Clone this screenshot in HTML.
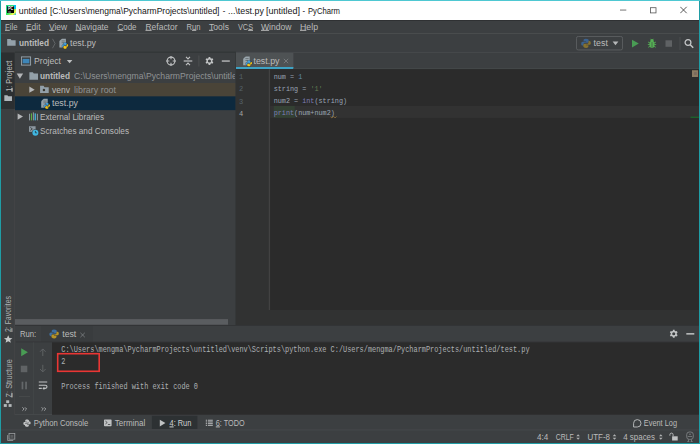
<!DOCTYPE html>
<html lang="en"><head><meta charset="utf-8"><title>untitled - test.py - PyCharm</title>
<style>
html,body{margin:0;padding:0}
body{width:700px;height:444px;background:#209da5;position:relative;overflow:hidden;font-family:'Liberation Sans', sans-serif}
#w{position:absolute;left:0;top:0;width:700px;height:444px;overflow:hidden}
#w div,#w svg,#w span.t{position:absolute;display:block}
span.t{white-space:pre}
u{text-decoration:underline;text-decoration-thickness:0.55px;text-underline-offset:0.4px}
</style></head>
<body><div id="w">
<svg style="left:1px;top:1px" width="698" height="19"><rect x="0.00" y="0.00" width="698.00" height="19.00" fill="#ffffff"/></svg>
<svg style="left:1px;top:20px" width="698" height="423"><rect x="0.00" y="0.00" width="698.00" height="423.00" fill="#3c3f41"/></svg>
<svg style="left:0px;top:0px" width="700" height="1"><rect x="0.00" y="0.00" width="700.00" height="1.00" fill="#4ec8d2"/></svg>
<svg style="left:6px;top:5px;" width="11" height="11"><g transform="translate(0.00,0.00)"><defs><linearGradient id="pcg" x1="0" y1="0" x2="1" y2="1"><stop offset="0" stop-color="#21d789"/><stop offset="0.55" stop-color="#3bea62"/><stop offset="0.8" stop-color="#fcf84a"/><stop offset="1" stop-color="#07c3f2"/></linearGradient></defs>
<rect width="10" height="10" fill="url(#pcg)"/><rect x="7.5" y="0" width="2.5" height="4" fill="#07c3f2"/><rect x="1.1" y="1.3" width="6.9" height="6.7" fill="#000"/><rect x="2.2" y="6.7" width="2.7" height="0.6" fill="#fff"/></g></svg>
<span class="t" style="left:0;top:0;transform:translate(8.00px,2.80px) scaleX(0.7944);font-family:'Liberation Sans', sans-serif;font-size:4.8px;font-weight:700;color:#fff;line-height:12px;height:12px;transform-origin:0 0;">PC</span>
<span class="t" style="left:0;top:0;transform:translate(18.80px,4.70px) scaleX(0.9203);font-family:'Liberation Sans', sans-serif;font-size:9.5px;font-weight:400;color:#151515;line-height:12px;height:12px;transform-origin:0 0;">untitled</span>
<span class="t" style="left:0;top:0;transform:translate(50.00px,4.70px) scaleX(0.8942);font-family:'Liberation Sans', sans-serif;font-size:9.5px;font-weight:400;color:#151515;line-height:12px;height:12px;transform-origin:0 0;">[C:\Users\mengma\PycharmProjects\untitled]</span>
<span class="t" style="left:0;top:0;transform:translate(222.80px,4.70px) scaleX(0.8197);font-family:'Liberation Sans', sans-serif;font-size:9.5px;font-weight:400;color:#151515;line-height:12px;height:12px;transform-origin:0 0;">-</span>
<span class="t" style="left:0;top:0;transform:translate(228.00px,4.70px) scaleX(0.9287);font-family:'Liberation Sans', sans-serif;font-size:9.5px;font-weight:400;color:#151515;line-height:12px;height:12px;transform-origin:0 0;">...\test.py</span>
<span class="t" style="left:0;top:0;transform:translate(266.00px,4.70px) scaleX(0.9465);font-family:'Liberation Sans', sans-serif;font-size:9.5px;font-weight:400;color:#151515;line-height:12px;height:12px;transform-origin:0 0;">[untitled]</span>
<span class="t" style="left:0;top:0;transform:translate(302.60px,4.70px) scaleX(0.8197);font-family:'Liberation Sans', sans-serif;font-size:9.5px;font-weight:400;color:#151515;line-height:12px;height:12px;transform-origin:0 0;">-</span>
<span class="t" style="left:0;top:0;transform:translate(308.00px,4.70px) scaleX(0.8082);font-family:'Liberation Sans', sans-serif;font-size:9.5px;font-weight:400;color:#151515;line-height:12px;height:12px;transform-origin:0 0;">PyCharm</span>
<svg style="left:620px;top:9px" width="7" height="2"><rect x="0.00" y="0.60" width="6.30" height="0.90" fill="#666"/></svg>
<svg style="left:650px;top:7px" width="7" height="7"><rect x="0.40" y="0.70" width="5.60" height="5.20" rx="0" fill="none" stroke="#555" stroke-width="0.8"/></svg>
<svg style="left:680px;top:6px;" width="8" height="9"><g transform="translate(0.00,0.50)"><path d="M0.3 0.3L6.7 6.7M6.7 0.3L0.3 6.7" stroke="#2e2e2e" stroke-width="0.8" fill="none"/></g></svg>
<svg style="left:1px;top:20px" width="698" height="1"><rect x="0.00" y="0.00" width="698.00" height="1.00" fill="#2f3133"/></svg>
<span class="t" style="left:0;top:0;transform:translate(5.00px,20.80px) scaleX(0.8439);font-family:'Liberation Sans', sans-serif;font-size:9.2px;font-weight:400;color:#bbbbbb;line-height:12px;height:12px;transform-origin:0 0;"><u>F</u>ile</span>
<span class="t" style="left:0;top:0;transform:translate(26.00px,20.80px) scaleX(0.9152);font-family:'Liberation Sans', sans-serif;font-size:9.2px;font-weight:400;color:#bbbbbb;line-height:12px;height:12px;transform-origin:0 0;"><u>E</u>dit</span>
<span class="t" style="left:0;top:0;transform:translate(49.00px,20.80px) scaleX(0.9114);font-family:'Liberation Sans', sans-serif;font-size:9.2px;font-weight:400;color:#bbbbbb;line-height:12px;height:12px;transform-origin:0 0;"><u>V</u>iew</span>
<span class="t" style="left:0;top:0;transform:translate(75.50px,20.80px) scaleX(0.9100);font-family:'Liberation Sans', sans-serif;font-size:9.2px;font-weight:400;color:#bbbbbb;line-height:12px;height:12px;transform-origin:0 0;"><u>N</u>avigate</span>
<span class="t" style="left:0;top:0;transform:translate(117.50px,20.80px) scaleX(0.8649);font-family:'Liberation Sans', sans-serif;font-size:9.2px;font-weight:400;color:#bbbbbb;line-height:12px;height:12px;transform-origin:0 0;"><u>C</u>ode</span>
<span class="t" style="left:0;top:0;transform:translate(145.50px,20.80px) scaleX(0.9213);font-family:'Liberation Sans', sans-serif;font-size:9.2px;font-weight:400;color:#bbbbbb;line-height:12px;height:12px;transform-origin:0 0;"><u>R</u>efactor</span>
<span class="t" style="left:0;top:0;transform:translate(186.50px,20.80px) scaleX(0.8304);font-family:'Liberation Sans', sans-serif;font-size:9.2px;font-weight:400;color:#bbbbbb;line-height:12px;height:12px;transform-origin:0 0;">R<u>u</u>n</span>
<span class="t" style="left:0;top:0;transform:translate(209.00px,20.80px) scaleX(0.9323);font-family:'Liberation Sans', sans-serif;font-size:9.2px;font-weight:400;color:#bbbbbb;line-height:12px;height:12px;transform-origin:0 0;"><u>T</u>ools</span>
<span class="t" style="left:0;top:0;transform:translate(238.00px,20.80px) scaleX(0.7934);font-family:'Liberation Sans', sans-serif;font-size:9.2px;font-weight:400;color:#bbbbbb;line-height:12px;height:12px;transform-origin:0 0;">VC<u>S</u></span>
<span class="t" style="left:0;top:0;transform:translate(261.00px,20.80px) scaleX(0.9331);font-family:'Liberation Sans', sans-serif;font-size:9.2px;font-weight:400;color:#bbbbbb;line-height:12px;height:12px;transform-origin:0 0;"><u>W</u>indow</span>
<span class="t" style="left:0;top:0;transform:translate(300.00px,20.80px) scaleX(0.9521);font-family:'Liberation Sans', sans-serif;font-size:9.2px;font-weight:400;color:#bbbbbb;line-height:12px;height:12px;transform-origin:0 0;"><u>H</u>elp</span>
<svg style="left:1px;top:33px" width="698" height="1"><rect x="0.00" y="0.10" width="698.00" height="0.90" fill="#4b4e50"/></svg>
<svg style="left:6px;top:38px;" width="12" height="10"><g transform="translate(0.70,0.10) scale(0.9400,0.8889)"><path d="M0.5 1h3.6l1 1.4h4.4v6.1h-9z" fill="#93a0a9"/></g></svg>
<span class="t" style="left:0;top:0;transform:translate(19.00px,37.30px) scaleX(0.9044);font-family:'Liberation Sans', sans-serif;font-size:9.2px;font-weight:700;color:#bbbbbb;line-height:12px;height:12px;transform-origin:0 0;">untitled</span>
<svg style="left:51px;top:38px;" width="6" height="12"><g transform="translate(0.90,0.00)"><path d="M0.6 0.8L3.2 5.5L0.6 10.2" stroke="#6b6f71" stroke-width="0.8" fill="none"/></g></svg>
<svg style="left:59px;top:38px;" width="12" height="12"><g transform="translate(0.20,0.30) scale(1.0000,1.0000)"><path d="M2.8 0.4h3.9v8.9h-6.5v-6.3z" fill="#a3afb7" opacity="0.9"/><path d="M2.5 0.4v2.4h-2.4z" fill="#9aa7b0" opacity="0.55"/>
<rect x="2.4" y="4" width="2.6" height="0.9" fill="#3c3f41" opacity="0.55"/><rect x="2.4" y="2.2" width="3.2" height="0.9" fill="#3c3f41" opacity="0.55"/>
<g transform="translate(2.8,4.3) scale(0.63)" stroke="#1b2a33" stroke-opacity="0.55" stroke-width="1.6" paint-order="stroke"><path d="M4.9 0.4c-2 0-2.3 0.9-2.3 1.6v1h2.5v0.5h-3.5c-1 0-1.4 0.9-1.4 1.9s0.4 1.9 1.4 1.9h0.9v-1.2c0-1 0.8-1.6 1.6-1.6h2.3c0.8 0 1.3-0.6 1.3-1.3v-1.2c0-0.8-0.7-1.6-2.8-1.6z" fill="#3f9fde"/>
<path d="M5.1 9.6c2 0 2.3-0.9 2.3-1.6v-1h-2.5v-0.5h3.5c1 0 1.4-0.9 1.4-1.9s-0.4-1.9-1.4-1.9h-0.9v1.2c0 1-0.8 1.6-1.6 1.6h-2.3c-0.8 0-1.3 0.6-1.3 1.3v1.2c0 0.8 0.7 1.6 2.8 1.6z" fill="#f8c514"/></g></g></svg>
<span class="t" style="left:0;top:0;transform:translate(70.00px,37.30px) scaleX(0.9602);font-family:'Liberation Sans', sans-serif;font-size:9.2px;font-weight:400;color:#bbbbbb;line-height:12px;height:12px;transform-origin:0 0;">test.py</span>
<svg style="left:576px;top:36px" width="47" height="15"><rect x="0.45" y="0.45" width="46.10" height="13.50" rx="1.8" fill="none" stroke="#5e6163" stroke-width="0.9"/></svg>
<svg style="left:581px;top:38px;" width="11" height="12"><g transform="translate(0.00,0.30)"><path d="M4.9 0.4c-2 0-2.3 0.9-2.3 1.6v1h2.5v0.5h-3.5c-1 0-1.4 0.9-1.4 1.9s0.4 1.9 1.4 1.9h0.9v-1.2c0-1 0.8-1.6 1.6-1.6h2.3c0.8 0 1.3-0.6 1.3-1.3v-1.2c0-0.8-0.7-1.6-2.8-1.6z" fill="#3c628e"/>
<path d="M5.1 9.6c2 0 2.3-0.9 2.3-1.6v-1h-2.5v-0.5h3.5c1 0 1.4-0.9 1.4-1.9s-0.4-1.9-1.4-1.9h-0.9v1.2c0 1-0.8 1.6-1.6 1.6h-2.3c-0.8 0-1.3 0.6-1.3 1.3v1.2c0 0.8 0.7 1.6 2.8 1.6z" fill="#87722f"/></g></svg>
<span class="t" style="left:0;top:0;transform:translate(593.60px,37.40px) scaleX(0.9654);font-family:'Liberation Sans', sans-serif;font-size:9.2px;font-weight:400;color:#bbbbbb;line-height:12px;height:12px;transform-origin:0 0;">test</span>
<svg style="left:612px;top:41px;" width="8" height="6"><g transform="translate(0.60,0.40)"><path d="M0 0h5.8l-2.9 3.8z" fill="#b6b8b9"/></g></svg>
<svg style="left:632px;top:39px;" width="8" height="10"><g transform="translate(0.00,0.80)"><path d="M0 0L6.8 3.8L0 7.6z" fill="#499c54"/></g></svg>
<svg style="left:647px;top:38px;" width="11" height="12"><g transform="translate(0.50,0.50)"><ellipse cx="4.5" cy="5.8" rx="2.6" ry="3.6" fill="#55b054"/><circle cx="4.5" cy="2" r="1.6" fill="#55b054"/>
<path d="M0.5 3.5l2 1M8.5 3.5l-2 1M0.3 6h2M8.7 6h-2M0.7 8.8l1.8-1M8.3 8.8l-1.8-1M3 0.3l0.8 1M6 0.3l-0.8 1" stroke="#55b054" stroke-width="0.8" fill="none"/>
<path d="M4.5 3.6v5.6" stroke="#3c3f41" stroke-width="0.6"/></g></svg>
<svg style="left:665px;top:40px" width="7" height="7"><rect x="0.50" y="0.30" width="6.50" height="6.50" fill="#5f6264"/></svg>
<svg style="left:679px;top:37px" width="2" height="13"><rect x="0.50" y="0.00" width="1.00" height="13.00" fill="#4b4e50"/></svg>
<svg style="left:684px;top:38px;" width="11" height="12"><g transform="translate(0.00,0.50)"><circle cx="4" cy="4" r="2.9" stroke="#c4c6c7" stroke-width="1.3" fill="none"/><path d="M6.2 6.2L9.2 9.2" stroke="#c4c6c7" stroke-width="1.5"/></g></svg>
<svg style="left:15px;top:51px" width="221" height="2"><rect x="0.00" y="0.70" width="221.00" height="0.90" fill="#2f3234"/></svg>
<svg style="left:236px;top:51px" width="463" height="2"><rect x="0.00" y="0.90" width="463.00" height="0.90" fill="#494b4e"/></svg>
<svg style="left:1px;top:53px" width="14" height="377"><rect x="0.00" y="0.00" width="14.00" height="377.00" fill="#3c3f41"/></svg>
<svg style="left:14px;top:109px" width="1" height="306"><rect x="0.10" y="0.00" width="0.90" height="306.00" fill="#434547"/></svg>
<svg style="left:1px;top:52px" width="14" height="57"><rect x="0.00" y="0.50" width="13.60" height="56.40" fill="#2c2f31"/></svg>
<span class="t" style="left:0;top:0;transform:translate(2.60px,91.80px) rotate(-90deg) scaleX(0.8537);font-family:'Liberation Sans', sans-serif;font-size:8.6px;font-weight:400;color:#bbbbbb;line-height:12px;height:12px;transform-origin:0 0;"><u>1</u>: Project</span>
<svg style="left:3px;top:94px;" width="11" height="9"><g transform="translate(0.90,0.50) scale(0.8500,0.7778)"><path d="M0.5 1h3.6l1 1.4h4.4v6.1h-9z" fill="#aeb5ba"/></g></svg>
<span class="t" style="left:0;top:0;transform:translate(2.40px,332.00px) rotate(-90deg) scaleX(0.8017);font-family:'Liberation Sans', sans-serif;font-size:8.6px;font-weight:400;color:#adb0b2;line-height:12px;height:12px;transform-origin:0 0;"><u>2</u>: Favorites</span>
<svg style="left:3px;top:335px;" width="11" height="10"><g transform="translate(0.80,0.00) scale(0.8800,0.8300)"><path d="M5 0.3l1.4 3.2l3.4 0.3l-2.6 2.2l0.8 3.4l-3-1.8l-3 1.8l0.8-3.4l-2.6-2.2l3.4-0.3z" fill="#c6c8c9"/></g></svg>
<span class="t" style="left:0;top:0;transform:translate(2.50px,397.40px) rotate(-90deg) scaleX(0.8510);font-family:'Liberation Sans', sans-serif;font-size:8.6px;font-weight:400;color:#adb0b2;line-height:12px;height:12px;transform-origin:0 0;"><u>Z</u>: Structure</span>
<svg style="left:3px;top:400px;" width="10" height="9"><g transform="translate(0.80,0.30)"><rect x="2.4" y="0" width="3" height="2.8" fill="#b4b8bb"/><rect x="0" y="3.8" width="3" height="2.8" fill="#b4b8bb"/><rect x="4.8" y="3.8" width="3" height="2.8" fill="#b4b8bb"/></g></svg>
<svg style="left:21px;top:56px;" width="11" height="11"><g transform="translate(0.00,0.50)"><rect x="0.4" y="0.4" width="9.2" height="8.2" fill="none" stroke="#9aa7b0" stroke-width="0.9"/><rect x="1.6" y="2.4" width="6.8" height="4.4" fill="#3e86b8"/></g></svg>
<span class="t" style="left:0;top:0;transform:translate(34.00px,55.20px) scaleX(0.9251);font-family:'Liberation Sans', sans-serif;font-size:9.4px;font-weight:400;color:#bbbbbb;line-height:12px;height:12px;transform-origin:0 0;">Project</span>
<svg style="left:66px;top:59px;" width="8" height="6"><g transform="translate(0.80,0.90)"><path d="M0 0h5.6l-2.8 3.4z" fill="#bcbebf"/></g></svg>
<svg style="left:166px;top:56px;" width="11" height="11"><g transform="translate(0.00,0.00)"><circle cx="5" cy="5" r="3.9" stroke="#c0c2c3" stroke-width="1.1" fill="none"/><path d="M5 0v3.3M5 10v-3.3M0 5h3.3M10 5h-3.3" stroke="#c0c2c3" stroke-width="1.1"/></g></svg>
<svg style="left:183px;top:56px;" width="11" height="11"><g transform="translate(0.50,0.00)"><path d="M0.2 5h8.6" stroke="#c0c2c3" stroke-width="1.2"/><path d="M2.5 0.9L4.5 3L6.5 0.9M2.5 9.1L4.5 7L6.5 9.1" stroke="#c0c2c3" stroke-width="1.1" fill="none"/></g></svg>
<svg style="left:198px;top:55px" width="2" height="12"><rect x="0.50" y="0.50" width="0.80" height="11.00" fill="#505355"/></svg>
<svg style="left:205px;top:56px;" width="10" height="11"><g transform="translate(0.20,0.70) scale(0.8500,0.8500)"><circle cx="5" cy="5" r="2.7" stroke="#c3c5c6" stroke-width="1.7" fill="none"/><path d="M5.00 2.40L5.00 0.30M2.75 3.70L0.93 2.65M2.75 6.30L0.93 7.35M5.00 7.60L5.00 9.70M7.25 6.30L9.07 7.35M7.25 3.70L9.07 2.65" stroke="#c3c5c6" stroke-width="2.1"/></g></svg>
<svg style="left:221px;top:60px" width="9" height="2"><rect x="0.80" y="0.40" width="8.00" height="1.30" fill="#c0c2c3"/></svg>
<svg style="left:15px;top:83px" width="221" height="14"><rect x="0.00" y="0.00" width="221.00" height="13.45" fill="#4a4438"/></svg>
<svg style="left:15px;top:96px" width="221" height="15"><rect x="0.00" y="0.40" width="221.00" height="13.75" fill="#0d293e"/></svg>
<svg style="left:16px;top:73px;" width="9" height="7"><g transform="translate(0.70,0.52) scale(1.0323,1.0833)"><path d="M0 0h6.2l-3.1 4.8z" fill="#b4b6b8"/></g></svg>
<svg style="left:28px;top:71px;" width="12" height="11"><g transform="translate(0.90,0.22) scale(0.9600,0.9889)"><path d="M0.5 1h3.6l1 1.4h4.4v6.1h-9z" fill="#93a0a9"/></g></svg>
<span class="t" style="left:0;top:0;transform:translate(40.00px,70.42px) scaleX(0.9044);font-family:'Liberation Sans', sans-serif;font-size:9.2px;font-weight:700;color:#bbbbbb;line-height:12px;height:12px;transform-origin:0 0;">untitled</span>
<div style="left:74px;top:70px;width:161px;height:13px;overflow:hidden" id="clip1"><span class="t" style="left:0;top:0;transform:translate(0.00px,0.42px) scaleX(0.9399);font-family:'Liberation Sans', sans-serif;font-size:9.2px;font-weight:400;color:#8f9294;line-height:12px;height:12px;transform-origin:0 0;">C:\Users\mengma\PycharmProjects\untitled</span></div>

<svg style="left:29px;top:86px;" width="7" height="8"><g transform="translate(0.30,0.58) scale(1.1250,1.0000)"><path d="M0 0v6.2l4.8-3.1z" fill="#b4b6b8"/></g></svg>
<svg style="left:39px;top:84px;" width="12" height="11"><g transform="translate(0.60,0.88) scale(0.9600,0.9556)"><path d="M0.5 1h3.6l1 1.4h4.4v6.1h-9z" fill="#93a0a9"/><circle cx="4.5" cy="5.4" r="1.3" fill="#3a372f"/></g></svg>
<span class="t" style="left:0;top:0;transform:translate(52.00px,83.88px) scaleX(0.9268);font-family:'Liberation Sans', sans-serif;font-size:9.2px;font-weight:400;color:#bbbbbb;line-height:12px;height:12px;transform-origin:0 0;">venv</span>
<span class="t" style="left:0;top:0;transform:translate(74.00px,83.88px) scaleX(0.9676);font-family:'Liberation Sans', sans-serif;font-size:9.2px;font-weight:400;color:#8f9294;line-height:12px;height:12px;transform-origin:0 0;">library root</span>
<svg style="left:41px;top:98px;" width="11" height="12"><g transform="translate(0.00,0.42) scale(1.0000,1.0000)"><path d="M2.8 0.4h3.9v8.9h-6.5v-6.3z" fill="#a3afb7" opacity="0.9"/><path d="M2.5 0.4v2.4h-2.4z" fill="#9aa7b0" opacity="0.55"/>
<rect x="2.4" y="4" width="2.6" height="0.9" fill="#3c3f41" opacity="0.55"/><rect x="2.4" y="2.2" width="3.2" height="0.9" fill="#3c3f41" opacity="0.55"/>
<g transform="translate(2.8,4.3) scale(0.63)" stroke="#1b2a33" stroke-opacity="0.55" stroke-width="1.6" paint-order="stroke"><path d="M4.9 0.4c-2 0-2.3 0.9-2.3 1.6v1h2.5v0.5h-3.5c-1 0-1.4 0.9-1.4 1.9s0.4 1.9 1.4 1.9h0.9v-1.2c0-1 0.8-1.6 1.6-1.6h2.3c0.8 0 1.3-0.6 1.3-1.3v-1.2c0-0.8-0.7-1.6-2.8-1.6z" fill="#3f9fde"/>
<path d="M5.1 9.6c2 0 2.3-0.9 2.3-1.6v-1h-2.5v-0.5h3.5c1 0 1.4-0.9 1.4-1.9s-0.4-1.9-1.4-1.9h-0.9v1.2c0 1-0.8 1.6-1.6 1.6h-2.3c-0.8 0-1.3 0.6-1.3 1.3v1.2c0 0.8 0.7 1.6 2.8 1.6z" fill="#f8c514"/></g></g></svg>
<span class="t" style="left:0;top:0;transform:translate(52.00px,97.33px) scaleX(0.9602);font-family:'Liberation Sans', sans-serif;font-size:9.2px;font-weight:400;color:#bbbbbb;line-height:12px;height:12px;transform-origin:0 0;">test.py</span>
<svg style="left:17px;top:113px;" width="7" height="8"><g transform="translate(0.60,0.47) scale(1.1250,1.0000)"><path d="M0 0v6.2l4.8-3.1z" fill="#b4b6b8"/></g></svg>
<svg style="left:29px;top:112px;" width="11" height="11"><g transform="translate(0.00,0.37)"><rect x="0" y="1.4" width="0.9" height="6.6" fill="#9aa7b0"/><rect x="1.9" y="1" width="1.05" height="7" fill="#62b543"/><rect x="3.9" y="0" width="0.9" height="8" fill="#9aa7b0"/><rect x="5.6" y="1" width="1.3" height="7" fill="#40b6e0"/><rect x="7.9" y="1.4" width="0.9" height="6.6" fill="#9aa7b0"/></g></svg>
<span class="t" style="left:0;top:0;transform:translate(40.00px,111.07px) scaleX(0.8951);font-family:'Liberation Sans', sans-serif;font-size:9.2px;font-weight:400;color:#bbbbbb;line-height:12px;height:12px;transform-origin:0 0;">External Libraries</span>
<svg style="left:29px;top:126px;" width="11" height="12"><g transform="translate(0.00,0.03)"><rect x="0" y="0.2" width="6.6" height="5.6" fill="#9aa7b0" opacity="0.85"/><path d="M1.3 1.4l2 1.5l-2 1.5" stroke="#3c3f41" stroke-width="0.9" fill="none"/><circle cx="6.4" cy="6.6" r="3.5" fill="#3c3f41"/><circle cx="6.4" cy="6.6" r="3" fill="#40b6e0"/><path d="M6.4 4.9v1.9h1.5" stroke="#26343c" stroke-width="0.8" fill="none"/></g></svg>
<span class="t" style="left:0;top:0;transform:translate(40.00px,125.03px) scaleX(0.8936);font-family:'Liberation Sans', sans-serif;font-size:9.2px;font-weight:400;color:#bbbbbb;line-height:12px;height:12px;transform-origin:0 0;">Scratches and Consoles</span>
<svg style="left:15px;top:319px" width="213" height="6"><rect x="0.00" y="0.10" width="213.00" height="5.60" fill="#5a5d60"/></svg>
<svg style="left:235px;top:53px" width="2" height="272"><rect x="0.40" y="0.00" width="0.80" height="272.00" fill="#323436"/></svg>
<svg style="left:236px;top:52px" width="58" height="17"><rect x="0.00" y="0.80" width="57.40" height="16.20" fill="#4e5254"/></svg>
<svg style="left:236px;top:67px" width="58" height="2"><rect x="0.00" y="0.00" width="57.40" height="2.00" fill="#3ea3c5"/></svg>
<svg style="left:243px;top:56px;" width="11" height="12"><g transform="translate(0.00,0.00) scale(1.0000,1.0000)"><path d="M2.8 0.4h3.9v8.9h-6.5v-6.3z" fill="#a3afb7" opacity="0.9"/><path d="M2.5 0.4v2.4h-2.4z" fill="#9aa7b0" opacity="0.55"/>
<rect x="2.4" y="4" width="2.6" height="0.9" fill="#3c3f41" opacity="0.55"/><rect x="2.4" y="2.2" width="3.2" height="0.9" fill="#3c3f41" opacity="0.55"/>
<g transform="translate(2.8,4.3) scale(0.63)" stroke="#1b2a33" stroke-opacity="0.55" stroke-width="1.6" paint-order="stroke"><path d="M4.9 0.4c-2 0-2.3 0.9-2.3 1.6v1h2.5v0.5h-3.5c-1 0-1.4 0.9-1.4 1.9s0.4 1.9 1.4 1.9h0.9v-1.2c0-1 0.8-1.6 1.6-1.6h2.3c0.8 0 1.3-0.6 1.3-1.3v-1.2c0-0.8-0.7-1.6-2.8-1.6z" fill="#3f9fde"/>
<path d="M5.1 9.6c2 0 2.3-0.9 2.3-1.6v-1h-2.5v-0.5h3.5c1 0 1.4-0.9 1.4-1.9s-0.4-1.9-1.4-1.9h-0.9v1.2c0 1-0.8 1.6-1.6 1.6h-2.3c-0.8 0-1.3 0.6-1.3 1.3v1.2c0 0.8 0.7 1.6 2.8 1.6z" fill="#f8c514"/></g></g></svg>
<span class="t" style="left:0;top:0;transform:translate(253.50px,54.60px) scaleX(0.9602);font-family:'Liberation Sans', sans-serif;font-size:9.2px;font-weight:400;color:#bbbbbb;line-height:12px;height:12px;transform-origin:0 0;">test.py</span>
<svg style="left:283px;top:58px;" width="7" height="7"><g transform="translate(0.50,0.50)"><path d="M0.3 0.3L4.7 4.7M4.7 0.3L0.3 4.7" stroke="#7f8385" stroke-width="0.8"/></g></svg>
<svg style="left:293px;top:68px" width="406" height="1"><rect x="0.40" y="0.10" width="405.60" height="0.80" fill="#46494b"/></svg>
<svg style="left:236px;top:69px" width="463" height="1"><rect x="0.00" y="0.00" width="463.00" height="0.60" fill="#2b2b2b"/></svg>
<svg style="left:236px;top:69px" width="463" height="242"><rect x="0.00" y="0.30" width="463.00" height="241.00" fill="#2b2b2b"/></svg>
<svg style="left:236px;top:69px" width="34" height="242"><rect x="0.00" y="0.30" width="34.00" height="241.00" fill="#313232"/></svg>
<svg style="left:268px;top:69px" width="3" height="242"><rect x="0.80" y="0.30" width="1.30" height="241.00" fill="#424242"/></svg>
<svg style="left:270px;top:105px" width="429" height="13"><rect x="0.10" y="0.90" width="428.90" height="12.00" fill="#323232"/></svg>
<svg style="left:273px;top:105px" width="22" height="13"><rect x="0.80" y="0.90" width="21.00" height="12.00" fill="#344134"/></svg>
<svg style="left:236px;top:310px" width="463" height="15"><rect x="0.00" y="0.00" width="463.00" height="15.00" fill="#313232"/></svg>
<svg style="left:692px;top:70px" width="7" height="7"><rect x="0.00" y="0.20" width="6.10" height="6.80" fill="#8a7a62"/></svg>
<svg style="left:694px;top:72px" width="3" height="3"><rect x="0.10" y="0.10" width="2.60" height="2.80" fill="#786a5e"/></svg>
<svg style="left:690px;top:116px" width="9" height="2"><rect x="0.50" y="0.70" width="8.50" height="1.00" fill="#17762a"/></svg>
<span class="t" style="left:0;top:0;transform:translate(238.90px,71.30px) scaleX(0.8960);font-family:'Liberation Mono', monospace;font-size:7.8px;font-weight:400;color:#56626a;line-height:12px;height:12px;transform-origin:0 0;">1</span>
<span class="t" style="left:0;top:0;transform:translate(238.90px,83.47px) scaleX(0.8960);font-family:'Liberation Mono', monospace;font-size:7.8px;font-weight:400;color:#56626a;line-height:12px;height:12px;transform-origin:0 0;">2</span>
<span class="t" style="left:0;top:0;transform:translate(238.90px,95.64px) scaleX(0.8960);font-family:'Liberation Mono', monospace;font-size:7.8px;font-weight:400;color:#56626a;line-height:12px;height:12px;transform-origin:0 0;">3</span>
<span class="t" style="left:0;top:0;transform:translate(238.90px,107.81px) scaleX(0.8960);font-family:'Liberation Mono', monospace;font-size:7.8px;font-weight:400;color:#a6a6a6;line-height:12px;height:12px;transform-origin:0 0;">4</span>
<span class="t" style="left:0;top:0;transform:translate(273.70px,70.70px) scaleX(0.8602);font-family:'Liberation Mono', monospace;font-size:7.9px;font-weight:400;color:#a9b7c6;opacity:.88;line-height:12px;height:12px;transform-origin:0 0;">num =</span>
<span class="t" style="left:0;top:0;transform:translate(298.15px,70.70px) scaleX(0.8579);font-family:'Liberation Mono', monospace;font-size:7.9px;font-weight:400;color:#6897bb;opacity:.88;line-height:12px;height:12px;transform-origin:0 0;">1</span>
<span class="t" style="left:0;top:0;transform:translate(273.70px,82.87px) scaleX(0.8604);font-family:'Liberation Mono', monospace;font-size:7.9px;font-weight:400;color:#a9b7c6;opacity:.88;line-height:12px;height:12px;transform-origin:0 0;">string =</span>
<span class="t" style="left:0;top:0;transform:translate(310.38px,82.87px) scaleX(0.8598);font-family:'Liberation Mono', monospace;font-size:7.9px;font-weight:400;color:#6a8759;opacity:.88;line-height:12px;height:12px;transform-origin:0 0;">&#x27;1&#x27;</span>
<span class="t" style="left:0;top:0;transform:translate(273.70px,95.04px) scaleX(0.8603);font-family:'Liberation Mono', monospace;font-size:7.9px;font-weight:400;color:#a9b7c6;opacity:.88;line-height:12px;height:12px;transform-origin:0 0;">num2 =</span>
<span class="t" style="left:0;top:0;transform:translate(302.22px,95.04px) scaleX(0.8598);font-family:'Liberation Mono', monospace;font-size:7.9px;font-weight:400;color:#8888c6;opacity:.88;line-height:12px;height:12px;transform-origin:0 0;">int</span>
<span class="t" style="left:0;top:0;transform:translate(314.45px,95.04px) scaleX(0.8604);font-family:'Liberation Mono', monospace;font-size:7.9px;font-weight:400;color:#a9b7c6;opacity:.88;line-height:12px;height:12px;transform-origin:0 0;">(string)</span>
<span class="t" style="left:0;top:0;transform:translate(273.70px,107.21px) scaleX(0.8602);font-family:'Liberation Mono', monospace;font-size:7.9px;font-weight:400;color:#8888c6;opacity:.88;line-height:12px;height:12px;transform-origin:0 0;">print</span>
<span class="t" style="left:0;top:0;transform:translate(294.07px,107.21px) scaleX(0.8604);font-family:'Liberation Mono', monospace;font-size:7.9px;font-weight:400;color:#a9b7c6;opacity:.88;line-height:12px;height:12px;transform-origin:0 0;">(num+num2)</span>
<svg style="left:330px;top:115px;" width="8" height="5"><g transform="translate(0.50,0.30)"><path d="M0 1.4l1.4 1.2l1.6-1.6l1.6 1.6l1.4-1.4" stroke="#a07a3c" stroke-width="0.8" fill="none"/></g></svg>
<svg style="left:15px;top:325px" width="684" height="1"><rect x="0.00" y="0.00" width="684.00" height="0.90" fill="#323436"/></svg>
<svg style="left:41px;top:326px" width="52" height="16"><rect x="0.00" y="0.00" width="52.00" height="15.70" fill="#393c3e"/></svg>
<span class="t" style="left:0;top:0;transform:translate(19.90px,328.40px) scaleX(0.8227);font-family:'Liberation Sans', sans-serif;font-size:9.4px;font-weight:400;color:#bbbbbb;line-height:12px;height:12px;transform-origin:0 0;">Run:</span>
<svg style="left:49px;top:329px;" width="11" height="11"><g transform="translate(0.20,0.00) scale(0.9800,0.9800)"><path d="M4.9 0.4c-2 0-2.3 0.9-2.3 1.6v1h2.5v0.5h-3.5c-1 0-1.4 0.9-1.4 1.9s0.4 1.9 1.4 1.9h0.9v-1.2c0-1 0.8-1.6 1.6-1.6h2.3c0.8 0 1.3-0.6 1.3-1.3v-1.2c0-0.8-0.7-1.6-2.8-1.6z" fill="#3f6f9f"/>
<path d="M5.1 9.6c2 0 2.3-0.9 2.3-1.6v-1h-2.5v-0.5h3.5c1 0 1.4-0.9 1.4-1.9s-0.4-1.9-1.4-1.9h-0.9v1.2c0 1-0.8 1.6-1.6 1.6h-2.3c-0.8 0-1.3 0.6-1.3 1.3v1.2c0 0.8 0.7 1.6 2.8 1.6z" fill="#b59327"/></g></svg>
<span class="t" style="left:0;top:0;transform:translate(62.20px,328.40px) scaleX(0.9322);font-family:'Liberation Sans', sans-serif;font-size:9.4px;font-weight:400;color:#bbbbbb;line-height:12px;height:12px;transform-origin:0 0;">test</span>
<svg style="left:80px;top:332px;" width="7" height="7"><g transform="translate(0.10,0.50)"><path d="M0.3 0.3L4.7 4.7M4.7 0.3L0.3 4.7" stroke="#7f8385" stroke-width="0.8"/></g></svg>
<svg style="left:669px;top:329px;" width="10" height="10"><g transform="translate(0.50,0.50) scale(0.8500,0.8500)"><circle cx="5" cy="5" r="2.7" stroke="#c3c5c6" stroke-width="1.7" fill="none"/><path d="M5.00 2.40L5.00 0.30M2.75 3.70L0.93 2.65M2.75 6.30L0.93 7.35M5.00 7.60L5.00 9.70M7.25 6.30L9.07 7.35M7.25 3.70L9.07 2.65" stroke="#c3c5c6" stroke-width="2.1"/></g></svg>
<svg style="left:686px;top:333px" width="9" height="2"><rect x="0.30" y="0.10" width="8.00" height="1.50" fill="#c0c2c3"/></svg>
<svg style="left:15px;top:341px" width="684" height="2"><rect x="0.80" y="0.60" width="683.20" height="0.70" fill="#323436"/></svg>
<svg style="left:33px;top:342px" width="2" height="73"><rect x="0.40" y="0.30" width="0.70" height="72.00" fill="#46494b"/></svg>
<svg style="left:21px;top:348px;" width="8" height="10"><g transform="translate(0.20,0.20)"><path d="M0 0L6.7 4.05L0 8.1z" fill="#499c54"/></g></svg>
<svg style="left:20px;top:365px" width="8" height="8"><rect x="0.80" y="0.70" width="6.50" height="6.50" fill="#606365"/></svg>
<svg style="left:21px;top:381px" width="3" height="9"><rect x="0.60" y="0.70" width="1.70" height="7.60" fill="#64686a"/></svg>
<svg style="left:25px;top:381px" width="2" height="9"><rect x="0.20" y="0.70" width="1.70" height="7.60" fill="#64686a"/></svg>
<svg style="left:19px;top:396px" width="11" height="1"><rect x="0.00" y="0.00" width="11.00" height="0.70" fill="#4b4e50"/></svg>
<svg style="left:22px;top:407px;" width="7" height="5"><g transform="translate(0.10,0.00)"><path d="M0.3 0.3L2 2L0.3 3.7M2.8 0.3L4.5 2L2.8 3.7" stroke="#b6b9bb" stroke-width="0.8" fill="none"/></g></svg>
<svg style="left:39px;top:348px;" width="9" height="9"><g transform="translate(0.50,0.20)"><path d="M3.3 7.8V0.8M0.5 3.6L3.3 0.7L6.1 3.6" stroke="#606365" stroke-width="0.95" fill="none"/></g></svg>
<svg style="left:39px;top:364px;" width="9" height="10"><g transform="translate(0.50,0.80)"><path d="M3.3 0V7M0.5 4.2L3.3 7.1L6.1 4.2" stroke="#606365" stroke-width="0.95" fill="none"/></g></svg>
<svg style="left:38px;top:381px;" width="11" height="10"><g transform="translate(0.50,0.00)"><path d="M0.3 1h8.4M0.3 4.2h6.5q1.7 0 1.7 1.6q0 1.6-1.7 1.6h-1.6M0.3 7.4h3" stroke="#c0c2c3" stroke-width="1.1" fill="none"/><path d="M5.8 5.8v3.2l-1.9-1.6z" fill="#c0c2c3"/></g></svg>
<svg style="left:41px;top:407px;" width="7" height="5"><g transform="translate(0.30,0.00)"><path d="M0.3 0.3L2 2L0.3 3.7M2.8 0.3L4.5 2L2.8 3.7" stroke="#b6b9bb" stroke-width="0.8" fill="none"/></g></svg>
<svg style="left:52px;top:342px" width="647" height="73"><rect x="0.00" y="0.30" width="647.00" height="72.40" fill="#2b2b2b"/></svg>
<span class="t" style="left:0;top:0;transform:translate(61.25px,343.90px) scaleX(0.8323);font-family:'Liberation Mono', monospace;font-size:8.3px;font-weight:400;color:#adb1b4;line-height:12px;height:12px;transform-origin:0 0;">C:\Users\mengma\PycharmProjects\untitled\venv\Scripts\python.exe C:/Users/mengma/PycharmProjects/untitled/test.py</span>
<span class="t" style="left:0;top:0;transform:translate(61.25px,356.20px) scaleX(0.8314);font-family:'Liberation Mono', monospace;font-size:8.3px;font-weight:400;color:#adb1b4;line-height:12px;height:12px;transform-origin:0 0;">2</span>
<span class="t" style="left:0;top:0;transform:translate(61.25px,380.80px) scaleX(0.8323);font-family:'Liberation Mono', monospace;font-size:8.3px;font-weight:400;color:#adb1b4;line-height:12px;height:12px;transform-origin:0 0;">Process finished with exit code 0</span>
<svg style="left:56px;top:352px" width="44" height="21"><rect x="1.70" y="1.70" width="41.50" height="17.60" rx="0" fill="none" stroke="#ea3634" stroke-width="1.6"/></svg>
<svg style="left:15px;top:414px" width="37" height="1"><rect x="0.00" y="0.20" width="37.00" height="0.80" fill="#484b4d"/></svg>
<svg style="left:151px;top:415px" width="47" height="14"><rect x="0.90" y="0.80" width="45.50" height="13.20" fill="#2d3133"/></svg>
<svg style="left:23px;top:419px;" width="9" height="10"><g transform="translate(0.20,0.30) scale(0.7600,0.7800)"><path d="M4.9 0.4c-2 0-2.3 0.9-2.3 1.6v1h2.5v0.5h-3.5c-1 0-1.4 0.9-1.4 1.9s0.4 1.9 1.4 1.9h0.9v-1.2c0-1 0.8-1.6 1.6-1.6h2.3c0.8 0 1.3-0.6 1.3-1.3v-1.2c0-0.8-0.7-1.6-2.8-1.6z" fill="#c0c2c3"/>
<path d="M5.1 9.6c2 0 2.3-0.9 2.3-1.6v-1h-2.5v-0.5h3.5c1 0 1.4-0.9 1.4-1.9s-0.4-1.9-1.4-1.9h-0.9v1.2c0 1-0.8 1.6-1.6 1.6h-2.3c-0.8 0-1.3 0.6-1.3 1.3v1.2c0 0.8 0.7 1.6 2.8 1.6z" fill="#c0c2c3"/></g></svg>
<span class="t" style="left:0;top:0;transform:translate(33.80px,417.40px) scaleX(0.8759);font-family:'Liberation Sans', sans-serif;font-size:8.8px;font-weight:400;color:#bbbbbb;line-height:12px;height:12px;transform-origin:0 0;">Python Console</span>
<svg style="left:104px;top:419px;" width="9" height="9"><g transform="translate(0.00,0.40) scale(0.8941,0.8500)"><rect width="8.5" height="8" rx="0.8" fill="#c0c2c3"/><path d="M1.6 2l2 1.7l-2 1.7M4.4 6h2.6" stroke="#3c3f41" stroke-width="0.9" fill="none"/></g></svg>
<span class="t" style="left:0;top:0;transform:translate(114.80px,417.40px) scaleX(0.9143);font-family:'Liberation Sans', sans-serif;font-size:8.8px;font-weight:400;color:#bbbbbb;line-height:12px;height:12px;transform-origin:0 0;">Terminal</span>
<svg style="left:159px;top:419px;" width="8" height="9"><g transform="translate(0.80,0.70)"><path d="M0 0L5.6 3.4L0 6.8z" fill="#c0c2c3"/></g></svg>
<span class="t" style="left:0;top:0;transform:translate(169.50px,417.40px) scaleX(0.8410);font-family:'Liberation Sans', sans-serif;font-size:8.8px;font-weight:400;color:#d0d2d3;line-height:12px;height:12px;transform-origin:0 0;"><u>4</u>: Run</span>
<svg style="left:205px;top:419px;" width="9" height="8"><g transform="translate(0.80,0.70) scale(0.9333,0.9000)"><path d="M0 0.6h1.4M0 2.5h1.4M0 4.4h1.4M0 6.3h1.4" stroke="#c0c2c3" stroke-width="1"/><path d="M2.3 0.6h5.2M2.3 2.5h5.2M2.3 4.4h5.2M2.3 6.3h5.2" stroke="#c0c2c3" stroke-width="1"/></g></svg>
<span class="t" style="left:0;top:0;transform:translate(215.80px,417.40px) scaleX(0.8258);font-family:'Liberation Sans', sans-serif;font-size:8.8px;font-weight:400;color:#bbbbbb;line-height:12px;height:12px;transform-origin:0 0;"><u>6</u>: TODO</span>
<svg style="left:633px;top:419px;" width="10" height="10"><g transform="translate(0.10,0.10)"><path d="M0.5 7.9V4.2A3.7 3.7 0 1 1 4.2 7.9Z" stroke="#c0c2c3" stroke-width="0.9" fill="none"/></g></svg>
<span class="t" style="left:0;top:0;transform:translate(643.80px,417.40px) scaleX(0.8379);font-family:'Liberation Sans', sans-serif;font-size:8.8px;font-weight:400;color:#bbbbbb;line-height:12px;height:12px;transform-origin:0 0;">Event Log</span>
<svg style="left:1px;top:429px" width="698" height="2"><rect x="0.00" y="0.60" width="698.00" height="0.70" fill="#4a4d4f"/></svg>
<svg style="left:7px;top:433px;" width="10" height="9"><g transform="translate(0.20,0.20) scale(1.0000,0.9625)"><rect x="1.8" y="0.4" width="5.8" height="5.8" fill="none" stroke="#9da0a2" stroke-width="0.8"/><path d="M0.4 2v5.6h5.6" stroke="#9da0a2" stroke-width="0.8" fill="none"/><rect x="3.2" y="1.8" width="3" height="3" fill="#5a5d5f"/></g></svg>
<span class="t" style="left:0;top:0;transform:translate(537.00px,431.00px) scaleX(0.9029);font-family:'Liberation Sans', sans-serif;font-size:9px;font-weight:400;color:#bbbbbb;line-height:12px;height:12px;transform-origin:0 0;">4:4</span>
<span class="t" style="left:0;top:0;transform:translate(555.80px,431.00px) scaleX(0.7654);font-family:'Liberation Sans', sans-serif;font-size:9px;font-weight:400;color:#bbbbbb;line-height:12px;height:12px;transform-origin:0 0;">CRLF</span>
<svg style="left:576px;top:434px;" width="5" height="7"><g transform="translate(0.30,0.00)"><path d="M0 2.2h3.6l-1.8-2zM0 3.8h3.6l-1.8 2z" fill="#b0b2b3"/></g></svg>
<span class="t" style="left:0;top:0;transform:translate(587.50px,431.00px) scaleX(0.8824);font-family:'Liberation Sans', sans-serif;font-size:9px;font-weight:400;color:#bbbbbb;line-height:12px;height:12px;transform-origin:0 0;">UTF-8</span>
<svg style="left:612px;top:434px;" width="6" height="7"><g transform="translate(0.70,0.00)"><path d="M0 2.2h3.6l-1.8-2zM0 3.8h3.6l-1.8 2z" fill="#b0b2b3"/></g></svg>
<span class="t" style="left:0;top:0;transform:translate(623.20px,431.00px) scaleX(0.8826);font-family:'Liberation Sans', sans-serif;font-size:9px;font-weight:400;color:#bbbbbb;line-height:12px;height:12px;transform-origin:0 0;">4 spaces</span>
<svg style="left:659px;top:434px;" width="5" height="7"><g transform="translate(0.00,0.00)"><path d="M0 2.2h3.6l-1.8-2zM0 3.8h3.6l-1.8 2z" fill="#b0b2b3"/></g></svg>
<svg style="left:669px;top:432px;" width="10" height="10"><g transform="translate(0.50,0.30)"><rect x="2.6" y="4" width="5.6" height="4.2" fill="#c0c2c3"/><path d="M3.6 4V2.4a1.6 1.6 0 0 0-3.2 0V3.4" stroke="#c0c2c3" stroke-width="0.9" fill="none"/></g></svg>
<svg style="left:685px;top:431px;" width="11" height="12"><g transform="translate(0.50,0.50)"><rect x="1.2" y="0.5" width="6.6" height="7.4" rx="2.6" fill="none" stroke="#7e8183" stroke-width="0.9"/><circle cx="4.5" cy="2.8" r="0.8" fill="#7e8183"/><path d="M2.2 5h4.6M3 7.9v2M6 7.9v2M1.8 10h2M5.2 10h2" stroke="#7e8183" stroke-width="0.8" fill="none"/></g></svg>
</div></body></html>
